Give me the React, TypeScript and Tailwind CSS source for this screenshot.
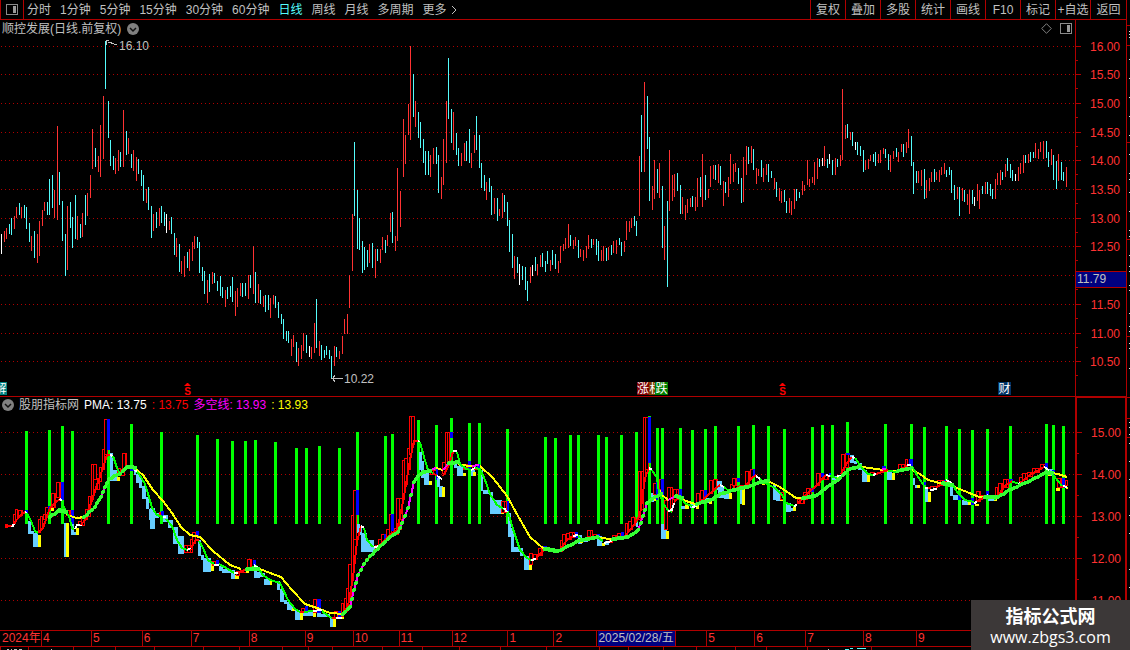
import React from "react";

const periods = ["分时", "1分钟", "5分钟", "15分钟", "30分钟", "60分钟", "日线", "周线", "月线", "多周期", "更多"];
const actions = ["复权", "叠加", "多股", "统计", "画线", "F10", "标记", "+自选", "返回"];

// x high low color (r = up, c = down, w = flat)
const priceBars = `1 234 254 w,4 231 242 r,6 228 239 r,9 224 234 c,11 218 235 c,14 216 229 r,16 207 218 r,19 203 215 c,21 207 218 r,24 205 218 c,
26 207 229 c,29 223 242 c,31 236 251 r,34 231 258 c,37 234 263 r,39 221 256 r,42 210 226 r,44 202 211 r,47 202 215 c,49 179 215 c,
52 175 208 c,54 190 218 r,57 126 220 r,59 172 205 c,62 201 241 c,65 234 276 c,67 206 270 r,70 202 228 c,72 217 248 c,75 195 239 c,
77 216 240 r,80 224 238 c,82 213 237 r,85 195 225 c,87 193 216 r,90 175 198 r,92 129 169 r,95 148 167 c,98 156 172 r,100 125 177 r,
103 96 159 r,105 41 89 c,108 101 138 c,110 140 166 c,113 156 170 c,115 158 174 r,118 150 171 r,120 152 167 c,123 110 167 r,126 131 155 c,
128 138 154 r,131 154 168 c,133 150 171 r,136 157 181 r,138 159 174 c,141 170 186 c,143 175 201 c,146 189 203 r,148 187 210 c,151 206 238 c,
153 214 231 r,156 212 228 c,159 208 226 r,161 206 223 c,164 212 226 c,166 214 233 w,169 221 230 r,171 217 234 c,174 233 255 c,176 238 257 r,
179 244 272 c,181 261 274 r,184 256 277 r,187 252 268 c,189 249 271 r,192 242 261 r,194 236 249 r,197 237 248 c,199 242 273 c,202 267 281 c,
204 271 294 c,207 280 303 r,209 274 292 c,212 272 284 r,214 273 283 c,217 281 291 c,220 276 296 c,222 287 298 c,225 290 307 r,227 287 299 c,
230 286 297 c,232 277 302 c,235 291 316 r,237 288 307 r,240 283 296 r,242 283 297 c,245 283 296 c,248 275 299 r,250 275 288 c,253 246 294 r,
255 272 303 c,258 284 303 r,260 290 304 c,263 296 307 r,265 295 312 c,268 295 310 c,270 298 318 r,273 295 304 r,275 296 308 c,278 302 318 c,
281 314 324 c,283 319 339 c,286 331 341 c,288 331 343 c,291 339 356 r,293 335 347 r,296 342 362 c,298 348 366 r,301 345 359 r,303 333 351 r,
306 335 353 c,309 346 357 w,311 347 359 r,314 323 353 r,316 299 348 c,319 341 356 r,321 345 360 c,324 350 358 c,326 346 355 c,329 350 359 c,
331 356 378 c,334 346 366 r,336 347 357 c,339 351 359 r,342 336 354 r,344 319 334 r,347 314 334 r,349 275 308 r,352 214 271 r,354 142 216 c,
357 190 249 c,359 218 250 c,362 241 273 c,364 247 270 c,367 250 267 c,369 244 263 r,372 243 268 c,375 249 278 r,377 249 261 c,380 249 263 r,
382 237 250 r,385 240 253 c,387 235 246 r,390 213 232 r,392 212 243 c,395 236 251 r,397 168 241 r,400 191 227 r,403 119 177 r,405 135 164 r,
408 104 135 r,410 46 140 r,413 74 117 c,415 101 127 r,418 112 138 c,420 122 148 c,423 139 163 c,425 151 175 c,428 151 175 c,430 155 177 r,
433 148 164 r,436 147 164 c,438 155 193 c,441 177 199 r,443 139 185 r,446 101 163 r,448 58 119 c,451 109 143 c,453 112 150 r,456 133 155 c,
458 148 166 c,461 153 166 r,464 143 161 r,466 141 161 c,469 129 163 c,471 153 168 r,474 135 153 r,476 116 150 c,479 135 168 c,481 163 188 c,
484 175 191 c,486 182 200 r,489 178 192 c,491 186 215 c,494 198 214 r,497 198 221 c,499 209 216 r,502 193 218 r,504 195 212 c,507 202 226 c,
509 220 252 c,512 234 268 c,514 256 279 r,517 257 273 c,519 264 285 w,522 266 280 c,525 267 290 c,527 281 301 c,530 267 283 r,532 265 276 w,
535 257 271 c,537 264 275 r,540 255 267 r,542 253 267 c,545 261 272 c,547 251 264 c,550 260 271 r,552 250 265 c,555 254 269 c,558 261 273 r,
560 246 263 r,563 244 251 r,565 238 249 r,568 224 248 r,570 235 246 c,573 240 249 r,575 237 246 r,578 240 258 c,580 249 257 r,583 250 261 r,
586 246 258 r,588 235 249 r,591 239 248 c,593 239 245 r,596 239 255 c,598 241 261 c,601 250 261 r,603 246 261 r,606 248 261 c,608 247 260 r,
611 245 255 c,613 241 253 r,616 240 254 r,619 238 245 c,621 242 256 c,624 241 252 r,626 221 240 r,629 221 232 r,631 218 228 r,634 216 226 c,
636 221 236 c,639 156 216 r,641 115 172 c,644 82 172 r,647 96 149 c,649 137 201 c,652 186 210 r,654 160 199 r,657 169 193 c,659 163 198 r,
662 186 248 c,664 226 260 r,667 201 287 c,669 150 211 r,672 175 201 r,674 174 197 r,677 173 191 c,680 185 214 c,682 197 214 r,685 205 220 r,
687 199 213 r,690 198 207 r,692 196 207 c,695 197 211 r,697 178 207 r,700 177 197 c,702 154 207 r,705 175 200 c,708 189 198 r,710 166 187 r,
713 165 179 r,715 165 180 c,718 164 183 r,720 166 185 c,723 181 206 r,725 182 193 c,728 177 197 r,730 154 184 r,733 164 182 r,735 163 172 r,
738 168 184 c,741 178 203 c,743 157 202 r,746 146 175 r,748 147 164 c,751 146 163 r,753 149 170 c,756 168 184 r,758 169 176 r,761 160 177 c,
763 168 182 r,766 164 175 r,768 164 182 c,771 171 178 c,774 178 189 r,776 182 197 c,779 188 201 r,781 191 203 r,784 190 202 c,786 201 213 c,
789 198 213 r,791 201 215 r,794 189 209 r,796 189 201 c,799 192 198 c,802 181 195 r,804 185 191 r,807 160 185 r,809 179 187 r,812 177 183 r,
814 162 185 r,817 158 179 r,819 159 167 c,822 158 166 w,824 146 166 r,827 159 168 c,829 154 164 w,832 160 175 c,835 158 175 r,837 159 167 c,
840 155 166 r,842 89 160 r,845 125 139 r,847 124 138 c,850 132 140 r,852 132 146 c,855 142 150 w,857 142 155 c,860 146 156 c,863 150 172 c,
865 160 170 r,868 159 169 r,870 155 161 r,873 154 162 c,875 152 166 c,878 154 163 r,880 150 163 r,883 148 154 r,885 149 158 c,888 154 170 c,
890 155 172 r,893 151 159 r,896 148 157 c,898 152 162 r,901 144 152 r,903 144 157 c,906 142 153 r,908 129 148 r,911 136 166 c,913 162 194 c,
916 171 183 c,918 171 183 r,921 170 186 r,924 169 199 c,926 180 198 r,929 178 191 r,931 172 182 r,934 169 182 c,936 172 180 r,939 170 182 r,
941 167 175 r,944 163 174 r,946 170 177 c,949 167 175 c,951 170 193 c,954 185 200 c,957 187 199 r,959 187 216 c,962 188 201 r,964 190 202 c,
967 194 205 r,969 190 214 r,972 190 204 c,974 197 206 w,977 184 201 r,979 190 209 r,982 186 194 c,985 182 194 r,987 182 194 c,990 184 196 c,
992 189 199 c,995 179 199 r,997 173 185 r,1000 170 185 r,1002 172 180 c,1005 164 177 r,1007 158 171 c,1010 164 178 c,1012 170 181 c,1015 174 181 w,
1018 167 181 r,1020 163 174 r,1023 155 173 r,1025 155 163 c,1028 154 163 r,1030 152 162 c,1033 152 158 c,1035 143 158 r,1038 149 159 r,1040 142 152 r,
1043 141 159 r,1046 141 158 c,1048 152 167 c,1051 149 165 r,1053 155 180 c,1056 161 189 c,1058 154 181 r,1061 162 180 c,1063 172 181 c,1066 167 187 r`;

// x top, every signal bar ends on the same base line
const signalBars = `25 431,48 430,61 426,71 431,107 450,130 424,160 432,196 435,216 439,231 441,244 441,254 440,274 442,295 448,305 448,318 446,
338 448,356 432,384 436,391 434,417 420,435 425,450 418,468 423,478 423,506 429,544 437,554 438,569 435,577 435,597 435,605 437,620 435,635 432,
648 416,656 428,661 428,679 428,691 430,704 429,714 426,737 426,752 425,767 426,783 429,811 427,821 425,831 425,846 422,884 424,910 424,923 427,
945 426,958 429,971 430,986 429,1009 426,1045 424,1052 425,1062 426`;

// color x1 y1 x2 y2 (r = hollow red, b = blue, l = light blue, y = yellow)
const boxes = `r 5 524 8 528,r 13 514 16 524,r 15 509 18 520,r 18 510 23 516,b 25 510 28 513,l 28 521 31 534,l 31 531 34 534,l 33 533 38 547,y 38 535 41 547,
r 38 519 41 533,r 40 516 43 529,r 43 514 46 520,r 45 507 49 515,b 48 506 51 509,y 51 508 54 511,r 51 493 56 508,r 56 482 61 498,b 61 482 64 500,
l 64 523 66 557,y 66 523 69 557,r 66 510 71 516,b 71 510 74 524,l 71 524 74 535,l 74 532 76 535,y 76 528 79 535,r 78 521 83 526,r 81 516 85 526,
r 85 509 88 520,r 88 496 91 517,r 91 464 94 500,r 93 464 97 480,r 97 478 100 490,r 99 467 102 482,r 102 449 105 470,r 104 419 108 455,b 107 419 110 450,
l 110 453 113 481,l 113 470 117 481,y 117 477 120 481,r 117 468 121 475,r 121 469 125 476,r 122 453 127 470,b 130 468 134 471,l 134 470 136 475,
l 136 474 139 483,l 139 477 142 488,l 142 486 146 499,l 146 497 149 509,l 149 509 151 520,l 150 508 155 529,l 155 513 159 518,r 159 512 161 516,
b 161 511 164 516,l 163 515 168 522,l 168 520 173 528,l 173 527 178 544,l 178 536 184 554,r 184 545 193 553,r 190 539 193 550,r 192 532 196 544,
b 196 531 199 536,l 198 540 201 556,l 201 555 204 560,l 203 558 211 572,y 211 562 214 571,r 212 561 216 566,b 216 560 219 566,l 219 566 223 571,
l 222 569 231 573,l 231 570 235 579,y 235 575 239 579,r 236 571 240 576,r 240 570 247 573,y 246 569 249 573,r 247 559 252 570,b 253 560 256 565,
l 254 566 257 578,l 257 572 260 578,l 260 573 265 577,l 264 579 270 585,y 270 581 272 585,l 277 581 280 590,l 280 589 284 602,l 284 600 287 604,
l 287 602 291 610,l 291 606 294 611,y 292 608 295 611,l 295 610 300 620,y 300 613 303 620,r 301 608 306 613,b 305 606 308 613,l 303 612 313 616,
r 313 599 318 613,b 317 599 321 613,y 313 613 316 617,l 317 613 321 617,l 320 614 330 617,l 330 617 334 627,y 333 618 336 627,r 334 611 341 619,
b 338 611 341 619,y 341 617 344 619,r 341 603 344 617,r 344 598 348 612,r 346 588 350 610,r 348 564 352 605,r 351 515 354 575,r 353 490 357 540,
b 356 490 359 515,l 357 524 360 533,l 360 526 362 535,l 361 533 367 552,l 367 540 374 552,l 374 546 376 552,r 375 545 380 550,r 378 539 383 546,
r 381 534 386 542,b 384 534 387 541,r 386 529 392 538,r 389 514 392 535,b 391 514 394 531,l 391 532 394 536,r 394 528 399 535,r 396 498 402 530,
r 399 498 403 520,r 402 460 405 500,r 404 458 408 485,r 407 448 411 470,r 409 416 412 455,r 411 416 415 445,l 419 452 422 470,l 421 461 424 478,
l 424 473 429 485,y 429 481 432 485,r 430 470 437 475,b 436 467 438 480,l 437 478 440 487,l 439 486 443 497,y 442 487 445 497,r 442 462 446 474,
r 445 432 448 470,r 447 432 450 465,b 450 432 453 438,l 454 461 457 468,l 457 466 463 476,y 463 473 466 476,r 463 464 468 470,b 468 461 471 469,
l 471 469 475 476,y 473 472 476 476,r 472 465 478 470,b 477 464 480 470,l 481 470 483 491,l 483 490 490 494,l 490 492 493 508,l 490 500 502 514,
y 501 510 504 514,r 501 501 507 513,b 507 501 509 511,l 508 513 511 537,l 511 528 514 552,l 514 547 520 552,l 520 548 523 556,l 524 556 529 570,
y 529 564 532 570,r 529 553 533 565,r 533 554 538 560,r 538 548 543 556,b 543 546 547 550,r 560 540 563 552,r 562 534 566 545,r 566 533 572 540,
r 569 532 575 538,b 575 532 578 538,l 578 535 582 544,l 582 541 588 542,y 580 540 583 543,r 587 530 593 537,r 593 534 597 537,b 597 534 600 538,
l 597 536 602 546,y 602 543 605 546,l 605 541 609 545,r 609 540 613 543,r 612 535 617 540,r 617 533 621 538,b 621 532 624 537,r 625 523 628 535,
r 628 521 633 530,r 631 517 636 526,l 636 522 638 527,r 638 471 641 520,r 641 471 644 510,r 643 417 646 480,r 645 417 649 470,b 648 417 651 463,
l 651 493 654 502,y 654 493 656 501,r 653 483 657 495,b 656 482 658 500,y 658 482 661 495,r 659 479 662 490,b 661 479 664 495,l 661 524 667 539,
y 666 531 669 539,r 664 500 668 530,r 667 487 673 512,r 673 489 679 500,b 679 489 682 496,l 681 506 686 509,y 685 504 689 509,l 690 504 694 508,
y 696 503 699 509,r 696 493 701 505,r 700 490 704 500,b 704 490 707 498,l 703 498 709 503,y 709 500 712 504,r 709 480 713 494,r 713 479 718 489,
l 717 481 722 490,l 718 486 724 498,l 724 491 729 499,y 729 493 732 499,r 730 484 735 492,r 732 478 737 486,b 737 478 740 482,l 740 485 742 504,
y 742 486 745 505,r 745 471 750 486,r 750 469 754 478,b 753 469 755 476,y 762 481 765 485,l 773 485 776 500,l 776 490 780 501,y 780 497 783 501,
r 780 492 784 500,l 786 503 791 512,l 791 508 794 511,y 793 506 796 511,r 797 499 805 504,r 803 492 808 500,r 806 488 812 496,b 811 488 814 492,
r 816 473 820 486,r 820 473 824 480,b 821 473 824 477,r 824 475 829 480,b 829 473 831 477,l 832 476 837 480,y 837 477 840 480,r 841 454 845 475,
r 845 453 849 468,b 846 453 850 455,l 850 455 854 463,l 854 461 857 464,l 858 463 862 470,l 862 470 867 482,y 867 475 870 482,r 870 472 875 476,
r 873 474 880 474,b 882 466 886 472,l 887 470 892 480,y 892 473 895 480,r 893 470 898 473,r 898 464 905 470,r 905 459 908 467,b 909 459 913 466,
l 913 478 915 485,l 915 485 918 488,y 917 485 920 488,b 924 482 926 485,l 925 488 928 502,y 928 492 931 502,r 930 486 937 490,r 937 480 944 486,
b 944 480 946 483,l 950 485 953 496,l 953 495 958 500,b 958 495 961 500,l 962 500 968 505,y 968 501 971 505,b 971 498 974 505,y 975 504 979 506,
r 976 491 981 502,r 981 495 986 498,b 986 491 989 497,l 988 497 995 501,y 994 499 997 501,r 995 487 998 498,r 998 483 1003 493,r 1003 479 1009 488,
b 1009 479 1013 482,r 1019 477 1023 483,r 1022 473 1028 480,r 1027 472 1033 477,r 1032 468 1040 473,r 1040 464 1046 468,b 1045 463 1048 468,
l 1048 469 1053 476,y 1048 473 1051 476,b 1052 470 1055 476,y 1056 488 1060 491,r 1057 478 1062 488,b 1062 478 1065 488,r 1065 480 1068 486,y 1066 487 1068 489`;

// color:points, color m = magenta, y = yellow, g = green, r = red, w = white
const lines = `y:62,511 70,516 77,518 84,517;y:133,467 143,475 153,490 163,501 172,513 181,527 190,535 200,537 213,551 230,565 241,569;
y:260,569 270,573 281,577 292,590 305,604 320,609 330,613 343,614;m:428,471 436,468;y:436,468 443,470;m:443,470 449,463;y:458,463 460,465 472,466;m:472,466 479,465;
y:480,466 493,478 507,496 518,516 530,537 544,549;y:600,538 612,539;y:661,494 668,500;m:668,500 676,496;y:683,500 695,504;y:768,481 780,487 796,498 803,498;
y:862,467 884,470;m:882,469 886,469;y:886,471 900,471;y:912,470 920,474 928,480 943,484;y:952,486 967,492 979,497 985,497;y:1052,473 1058,474 1067,477;
r:5,526 12,526;w:12,527 14,524;r:14,523 20,516 25,512;w:25,512 27,513;g:27,513 31,521 35,531 38,533;r:38,533 43,528 50,508 56,502 60,499;w:60,499 62,501;
g:62,502 66,512 69,516 72,528 74,530;w:75,529 77,525 82,525;r:81,525 85,520 91,503 97,485 103,468 107,455 110,455;w:110,455 113,456;g:113,456 117,468 120,474;
w:119,474 122,473;r:122,473 125,469;g:130,467 134,468;w:134,469 137,472;g:137,472 139,474 145,484 149,497 152,508 157,515 163,517;w:163,517 166,517;
g:166,519 172,526 177,540 182,548 187,550;w:187,550 191,548;r:191,548 196,540 199,540;g:199,541 203,548 208,560 214,564;w:214,565 219,565;g:219,564 228,569 234,573;
w:234,573 238,573;r:238,573 247,569;g:247,569 257,566;w:254,565 258,568;g:258,568 263,575 270,580 280,583 288,600 295,609 300,612;r:300,612 304,612;g:304,612 313,611;
w:313,611 322,610;g:322,611 328,616 332,618;r:332,618 336,618;w:336,618 342,618;r:342,615 348,606 353,578 357,542 361,526;w:361,526 364,528;g:364,528 367,540 373,547;
w:374,547 380,546;r:380,545 392,533 397,530 401,512 405,490 410,460 414,441 418,441;w:418,441 420,442;g:420,442 424,457 428,470 433,473;r:433,474 437,475;w:437,476 442,479;
r:443,476 449,465 453,452;w:453,451 457,451;g:457,452 460,464 466,469 471,470;w:471,470 475,468;g:475,468 480,469 485,480 490,494 497,505 504,509;w:504,508 507,512;
g:508,512 514,532 520,550 527,558 531,560;w:531,560 536,559;r:536,558 545,549;r:560,550 567,540 573,536;w:573,536 578,535;g:578,536 583,540 590,538 597,537 603,541;
w:604,543 612,541;r:612,541 625,536 634,525 640,515 645,478 649,468;w:649,468 652,470;g:652,470 657,478 659,492 664,505 668,510 672,512;w:668,511 672,510 674,503;
r:674,502 680,497;g:680,497 686,504 693,506;w:692,507 697,506;r:697,505 707,496 715,489 720,485;w:720,485 724,487;g:724,487 729,491;w:729,492 732,491;r:732,491 740,486 745,486 752,478 756,475;
w:756,476 760,479;g:760,479 765,483 775,488 782,495 786,503 794,506;w:794,506 797,505;r:797,504 807,494 817,485 826,475;w:826,475 830,476;g:830,476 837,478;w:837,476 841,476;
r:841,474 847,463 852,457;w:852,457 855,458;g:855,458 862,468 868,474 873,475;w:873,475 876,474;r:876,474 888,470;g:888,471 898,472;r:898,471 908,465;w:907,465 911,465;
g:912,466 918,477 925,487;w:925,488 928,488;r:928,488 931,488;w:930,490 937,489;r:937,487 947,481;w:946,480 952,483;g:952,483 957,492 965,500 974,502;w:974,503 977,502;
r:977,501 986,497;w:986,497 988,495;g:988,497 996,499;r:996,498 1005,486 1012,481;g:1012,482 1018,483;w:1018,484 1020,483;r:1020,483 1030,475 1043,468;w:1044,467 1049,470;
g:1049,471 1054,476 1062,486;r:1061,487 1064,487;w:1063,486 1067,487`;

// long average, dotted while it rises
const dotted = `50,517 59,510 66,512;84,517 92,510 97,503 101,497 105,487 109,479 114,476 120,474 123,471 127,467 132,467 135,468;247,569 258,569;
343,614 350,607 354,590 358,575 364,564 370,556 380,546 390,537 398,532 402,523 408,508 414,482 418,476 423,472 430,471;449,463 458,462;
545,549 558,551 568,546 578,541 597,537;613,539 628,537 638,530 643,516 647,503 655,497 661,494;676,496 682,498;
697,504 710,500 720,494 740,488 750,486 760,482 768,481;803,498 817,495 830,485 840,478 848,470 860,466;898,471 911,468;943,483 952,485;
985,497 998,497 1009,490 1025,483 1035,478 1046,472 1052,473`;

const colors: Record<string, string> = {
  r: "#ff0000",
  b: "#0000ff",
  l: "#66ccff",
  y: "#ffff00",
  m: "#ff00ff",
  g: "#00ff00",
  w: "#ffffff",
};
const barColors: Record<string, string> = { r: "#ff3232", c: "#54fcfc", w: "#ffffff" };

const split = (s: string, sep: string) => s.split(sep).map((v) => v.trim());
const toPoints = (s: string) => split(s, " ").map((p) => p.split(",").map(Number));

function spread(points: number[][]) {
  const out: number[][] = [];
  for (let i = 0; i < points.length - 1; i++) {
    const [x1, y1] = points[i];
    const [x2, y2] = points[i + 1];
    const n = Math.max(1, Math.round((x2 - x1) / 2.54));
    for (let k = 0; k < n; k++) out.push([x1 + ((x2 - x1) * k) / n, y1 + ((y2 - y1) * k) / n]);
  }
  out.push(points[points.length - 1]);
  return out;
}

const priceGrid = [46, 74, 103, 132, 160, 189, 218, 246, 275, 304, 333, 361];
const priceLabels = ["16.00", "15.50", "15.00", "14.50", "14.00", "13.50", "13.00", "12.50", "", "11.50", "11.00", "10.50"];
const pmaGrid = [432, 474, 516, 558, 600];
const pmaLabels = ["15.00", "14.00", "13.00", "12.00", "11.00"];

const months = [
  { label: "2024年", span: 41 },
  { label: "4", span: 50 },
  { label: "5", span: 51 },
  { label: "6", span: 49 },
  { label: "7", span: 58 },
  { label: "8", span: 56 },
  { label: "9", span: 48 },
  { label: "10", span: 46 },
  { label: "11", span: 53 },
  { label: "12", span: 56 },
  { label: "1", span: 46 },
  { label: "2", span: 43 },
  { label: "2025/02/28/五", span: 110, active: true },
  { label: "5", span: 48 },
  { label: "6", span: 51 },
  { label: "7", span: 58 },
  { label: "8", span: 53 },
  { label: "9", span: 210 },
];

function Grid({ rows }: { rows: number[] }) {
  return (
    <g stroke="#b00000" strokeDasharray="1 3">
      {rows.map((y) => (
        <line key={y} x1="1" x2="1075" y1={y + 0.5} y2={y + 0.5} />
      ))}
    </g>
  );
}

function Axis({ rows, labels, step }: { rows: number[]; labels: string[]; step: number }) {
  return (
    <>
      {rows.map((y, i) => (
        <g key={y}>
          <rect x="0" y={y} width="5" height="1" fill="#b00000" />
          <rect x="0" y={y + step} width="2" height="1" fill="#b00000" />
          <text x="44" y={y + 5} textAnchor="end" fontSize="12" fill="#ff3232">
            {labels[i]}
          </text>
        </g>
      ))}
    </>
  );
}

function Badge({ x, w, fill, text }: { x: number; w: number; fill: string; text: string }) {
  return (
    <g>
      <rect x={x} y="382" width={w} height="13" fill={fill} />
      <text x={x + w / 2} y="393" textAnchor="middle" fontSize="12" fill="#ffffff">
        {text}
      </text>
    </g>
  );
}

function Dividend({ x }: { x: number }) {
  return (
    <g fill="#ff0000">
      <path d={`M${x} 386l3-3h1l3 3z`} />
      <text x={x + 3.5} y="395" textAnchor="middle" fontSize="10" fontWeight="bold">
        S
      </text>
    </g>
  );
}

function PriceChart() {
  return (
    <svg viewBox="0 37 1075 359" preserveAspectRatio="none" className="block h-[359px] w-full" role="img" aria-label="日线">
      <g shapeRendering="crispEdges">
        <Grid rows={priceGrid} />
        {split(priceBars, ",").map((row) => {
          const [x, top, bottom, c] = row.split(" ");
          return <rect key={x} x={x} y={top} width="1" height={+bottom - +top} fill={barColors[c]} />;
        })}
        <path d="M106 40.5h3M106.5 41v4M108 42.5h4M111 43.5h3M114 44.5h3" stroke="#c0c0c0" fill="none" />
        <path d="M331 378.5h12M334.5 375v2M333.5 376v2M333.5 379v2M334.5 380v2" stroke="#c0c0c0" fill="none" />
      </g>
      <g fontSize="12" fill="#c0c0c0">
        <text x="119" y="50">16.10</text>
        <text x="344" y="383">10.22</text>
      </g>
      <Dividend x={184} />
      <Dividend x={779} />
      <Badge x={-6} w={13} fill="#008080" text="解" />
      <Badge x={637} w={12} fill="#800000" text="涨" />
      <Badge x={649} w={13} fill="#804000" text="权" />
      <Badge x={655} w={13} fill="#008000" text="跌" />
      <Badge x={998} w={13} fill="#003366" text="财" />
    </svg>
  );
}

function Box({ row }: { row: string }) {
  const [c, ...n] = row.split(" ");
  const [x1, y1, x2, y2] = n.map(Number);
  if (c === "r") {
    const dividers: number[] = [];
    for (let x = x1 + 3; x < x2 - 1; x += 3) dividers.push(x);
    return (
      <g stroke="#ff0000" fill="none">
        <rect x={x1 + 0.5} y={y1 + 0.5} width={x2 - x1 - 1} height={Math.max(0, y2 - y1 - 1)} fill="#000000" />
        {dividers.map((x) => (
          <line key={x} x1={x + 0.5} x2={x + 0.5} y1={y1} y2={y2} />
        ))}
      </g>
    );
  }
  return <rect x={x1} y={y1} width={x2 - x1} height={y2 - y1} fill={colors[c]} />;
}

function PmaChart() {
  return (
    <svg viewBox="0 413 1075 217" preserveAspectRatio="none" className="block h-[217px] w-full" role="img" aria-label="PMA">
      <g shapeRendering="crispEdges">
        <Grid rows={pmaGrid} />
        {split(signalBars, ",").map((row) => {
          const [x, top] = row.split(" ").map(Number);
          return <rect key={x} x={x} y={top} width="3" height={524 - top} fill="#00ff00" />;
        })}
        {split(boxes, ",").map((row, i) => (
          <Box key={i} row={row} />
        ))}
        {split(lines, ";").map((row, i) => {
          const [c, points] = row.split(":");
          return <polyline key={i} points={points} fill="none" stroke={colors[c]} strokeWidth="2" />;
        })}
        {split(dotted, ";").map((row, i) => (
          <g key={i}>
            <polyline points={row} fill="none" stroke="#ff00ff" strokeWidth="2" />
            {spread(toPoints(row)).map(([x, y], k) => (
              <circle key={k} cx={Math.round(x)} cy={Math.round(y)} r="2" fill="#33ff33" />
            ))}
          </g>
        ))}
      </g>
    </svg>
  );
}

function PanelIcon() {
  return (
    <svg width="12" height="11" viewBox="0 0 12 11" shapeRendering="crispEdges">
      <rect x="0.5" y="0.5" width="11" height="10" rx="1" fill="none" stroke="#8a8a8a" />
      <rect x="7" y="2" width="3" height="7" fill="#9a9a9a" />
    </svg>
  );
}

function ChevronButton({ label }: { label: string }) {
  return (
    <button type="button" aria-label={label} className="shrink-0">
      <svg width="12" height="12" viewBox="0 0 12 12" className="block">
        <circle cx="6" cy="6" r="6" fill="#808080" />
        <path d="M3 5l3 3 3-3" fill="none" stroke="#101010" strokeWidth="1.5" />
      </svg>
    </button>
  );
}

function Toolbar() {
  return (
    <header className="flex h-5 items-stretch justify-between border-b border-[#b00000]">
      <nav className="flex items-center">
        <button type="button" aria-label="侧栏" className="flex h-full w-6 items-center justify-center border-x border-[#b00000]">
          <PanelIcon />
        </button>
        <div className="flex gap-[9px] pl-[3px] whitespace-nowrap">
          {periods.map((p) => (
            <button key={p} type="button" className={p === "日线" ? "text-[#54fcfc]" : "text-[#c0c0c0]"}>
              {p}
            </button>
          ))}
        </div>
        <svg width="6" height="10" viewBox="0 0 6 10" className="ml-1">
          <path d="M1 1l4 4-4 4" fill="none" stroke="#c0c0c0" />
        </svg>
      </nav>
      <div className="flex">
        {actions.map((a) => (
          <button
            key={a}
            type="button"
            className="w-[35px] border-l border-[#b00000] text-center whitespace-nowrap text-[#c0c0c0] last:w-9"
          >
            {a}
          </button>
        ))}
      </div>
    </header>
  );
}

function DateAxis() {
  return (
    <div className="flex h-4 border-t border-[#b00000] leading-[15px] text-[#ff3232]">
      {months.map((m, i) => (
        <div
          key={i}
          style={{ width: `${(m.span / 1127) * 100}%` }}
          className={i === 0 ? "pl-0.5 whitespace-nowrap" : "border-l border-[#b00000] pl-px whitespace-nowrap"}
        >
          {m.active ? (
            <span className="inline-block h-[15px] border-r border-[#b00000] bg-[#000080] pr-px text-[#c0c0c0]">{m.label}</span>
          ) : (
            m.label
          )}
        </div>
      ))}
    </div>
  );
}

export default function App() {
  return (
    <main className="relative flex w-full overflow-hidden bg-black font-['Liberation_Sans','Noto_Sans_CJK_SC',sans-serif] text-[12px] leading-4">
      <div className="min-w-0 flex-1 border-r border-[#b00000]">
        <Toolbar />
        <section className="flex border-b border-[#b00000]">
          <div className="min-w-0 flex-1">
            <div className="flex h-[17px] items-center justify-between pr-[3px] pl-0.5">
              <div className="flex items-center gap-1.5">
                <h1 className="text-[#c0c0c0]">顺控发展(日线.前复权)</h1>
                <ChevronButton label="切换股票" />
              </div>
              <div className="flex items-center gap-2">
                <svg width="11" height="11" viewBox="0 0 11 11">
                  <path d="M5.5 0.7l4.8 4.8-4.8 4.8L0.7 5.5z" fill="none" stroke="#808080" />
                </svg>
                <PanelIcon />
              </div>
            </div>
            <PriceChart />
          </div>
          <svg viewBox="0 20 50 376" className="block h-[376px] w-[51px] border-l border-[#b00000]" preserveAspectRatio="none">
            <Axis rows={priceGrid} labels={priceLabels} step={14} />
            <rect x="0" y="271" width="50" height="17" fill="#b00000" />
            <rect x="0" y="272" width="50" height="15" fill="#000080" />
            <text x="1" y="283" fontSize="12" fill="#c0c0c0">
              11.79
            </text>
          </svg>
        </section>
        <section className="flex">
          <div className="min-w-0 flex-1">
            <div className="flex h-4 items-center gap-[5px] pl-0.5 whitespace-nowrap">
              <ChevronButton label="切换指标" />
              <h2 className="text-[#c0c0c0]">股朋指标网</h2>
              <span className="text-white">PMA: 13.75</span>
              <span className="text-[#ff0000]">: 13.75</span>
              <span className="text-[#ff00ff]">多空线: 13.93</span>
              <span className="text-[#ffff00]">: 13.93</span>
            </div>
            <PmaChart />
          </div>
          <svg viewBox="0 398 48 232" className="block h-[233px] w-[51px] border-t border-r border-l-2 border-[#b00000]" preserveAspectRatio="none">
            <Axis rows={pmaGrid} labels={pmaLabels} step={21} />
          </svg>
        </section>
        <DateAxis />
        <svg viewBox="0 646 1126 4" className="block h-1 w-full" preserveAspectRatio="none" shapeRendering="crispEdges">
          <rect x="0" y="646" width="1126" height="1" fill="#b00000" />
          {[0, 28, 73, 115, 154, 203, 239, 282, 308, 332, 382, 422, 459, 500, 546, 599, 628, 663, 696, 735, 766, 807, 871].map((x) => (
            <rect key={x} x={x} y="647" width="1" height="3" fill="#b00000" />
          ))}
          <path d="M7 649.5h2M11 649.5h1M14 649.5h3M19 649.5h3M51 649.5h1M828 649.5h1" stroke="#c0c0c0" />
          <path d="M845 649.5h4M850 648.5h3M857 648.5h9" stroke="#54fcfc" />
        </svg>
      </div>
      <svg viewBox="0 0 3 650" className="block h-[650px] w-[3px] shrink-0" shapeRendering="crispEdges">
        {[25, 45, 142, 239, 336, 397, 418, 437].map((y) => (
          <rect key={y} x="0" y={y} width="3" height="1" fill="#b00000" />
        ))}
        {[31, 34, 37, 59, 78, 97, 116, 135, 154, 173, 179, 192, 211, 230, 236, 255, 266, 271, 285, 290, 313, 326, 331, 343, 348, 368, 422, 427, 434, 443, 461, 479, 497, 515, 533, 569, 587].map((y) => (
          <rect key={y} x="2" y={y} width="1" height="1" fill="#e0e0e0" />
        ))}
      </svg>
      <aside className="absolute right-0 bottom-0 flex h-[50px] w-[159px] flex-col items-center justify-center bg-[#3c3838] text-white">
        <strong className="font-['Noto_Sans_CJK_SC',sans-serif] text-[18px] leading-6 font-bold">指标公式网</strong>
        <a href="#" className="font-['Open_Sans',sans-serif] text-[16px] leading-5">
          www.zbgs3.com
        </a>
      </aside>
    </main>
  );
}
